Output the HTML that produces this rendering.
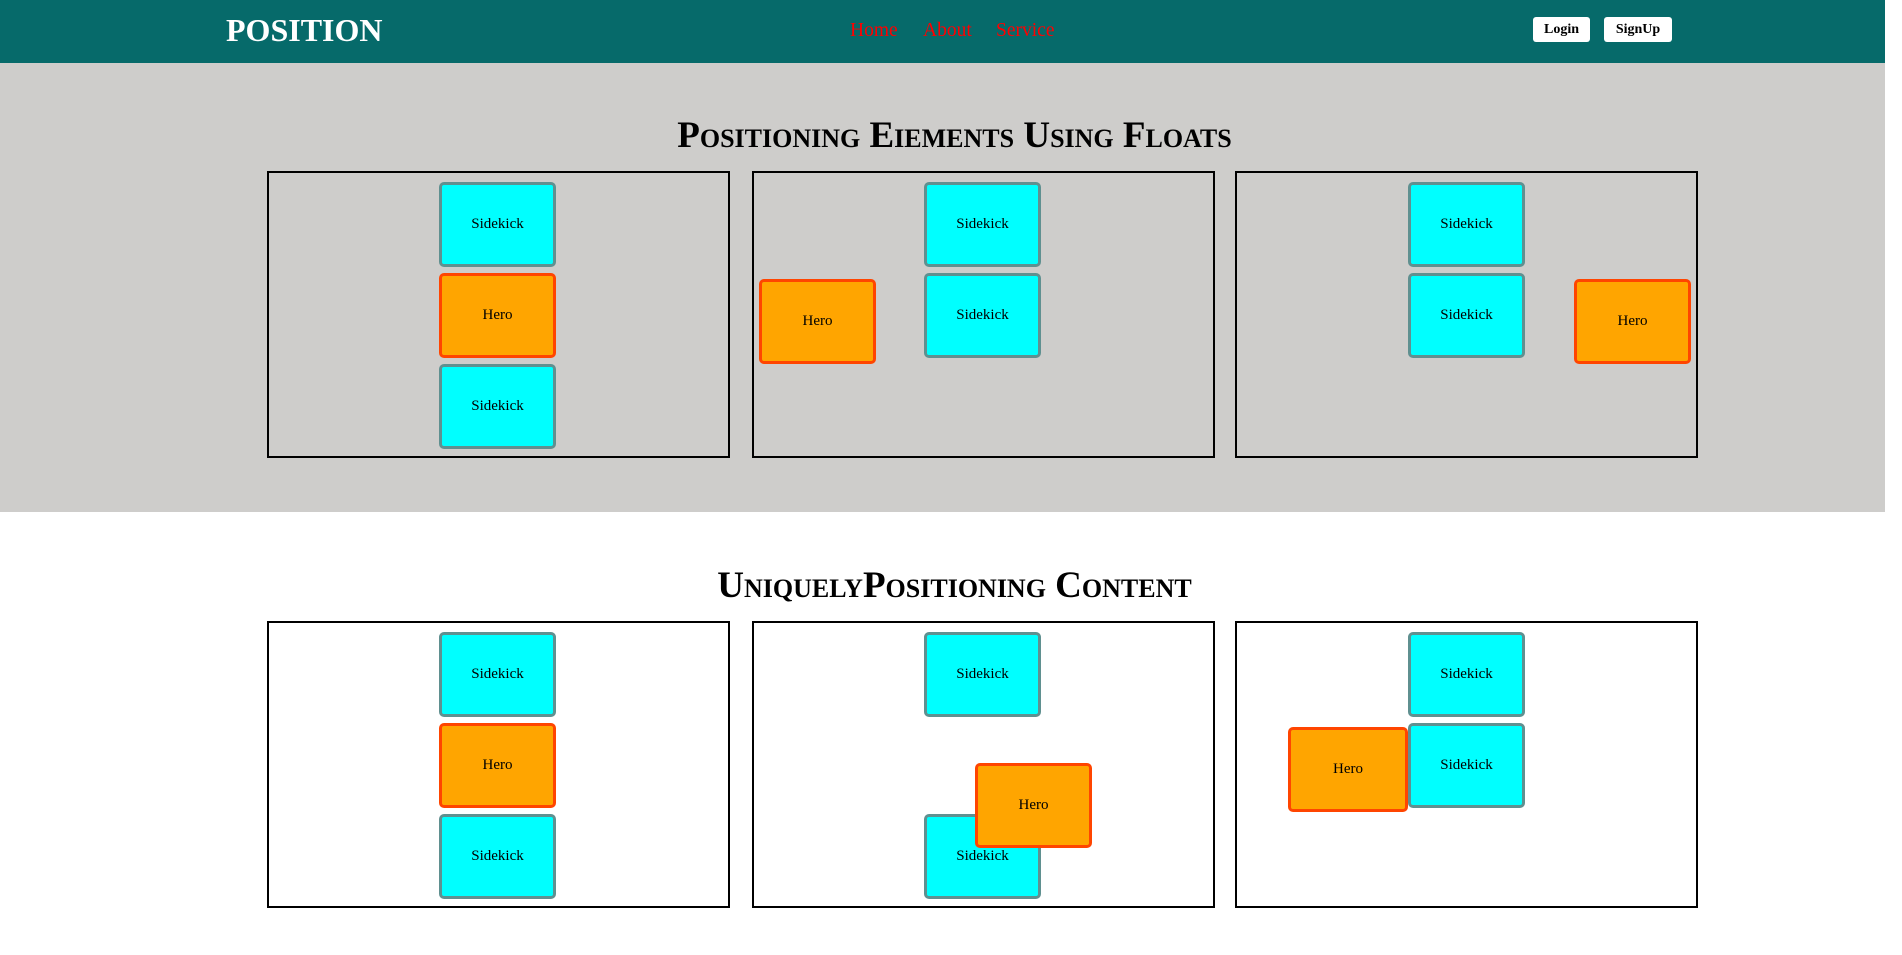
<!DOCTYPE html>
<html><head><meta charset="utf-8"><style>
*{margin:0;padding:0;box-sizing:border-box}
body{width:1902px;height:955px;background:#fff;font-family:"Liberation Serif",serif;position:relative;overflow:hidden}
.nav{position:absolute;left:0;top:0;width:1885px;height:63px;background:#066a6a}
.logo{position:absolute;left:226px;top:12px;color:#fff;font-weight:bold;font-size:32px}
.links a{position:absolute;top:20px;color:#f00;font-size:19.5px;text-decoration:none}
.btn{position:absolute;top:17px;height:25px;background:#fff;border-radius:3px;font-weight:bold;font-size:14px;text-align:center;line-height:25px;color:#000}
.gray{position:absolute;left:0;top:63px;width:1885px;height:449px;background:#cecdcb}
h1{position:absolute;left:12px;width:1885px;text-align:center;font-size:37px;font-variant:small-caps;font-weight:bold;color:#000}
.box{position:absolute;border:2px solid #000;width:463px;height:287px}
.i{position:absolute;width:117px;height:85px;border:3px solid #5f9090;border-radius:5px;background:#0ff;font-size:15px;display:flex;align-items:center;justify-content:center}
.h{background:#ffa500;border-color:#ff4500}
</style></head><body>
<div class="nav">
<div class="logo">POSITION</div>
<div class="links"><a style="left:850px">Home</a><a style="left:923px">About</a><a style="left:996px">Service</a></div>
<div class="btn" style="left:1533px;width:57px">Login</div>
<div class="btn" style="left:1604px;width:68px">SignUp</div>
</div>
<div class="gray"></div>
<h1 style="top:114px">Positioning Eiements Using Floats</h1>
<div class="box" style="left:267px;top:171px"></div>
<div class="box" style="left:752px;top:171px"></div>
<div class="box" style="left:1235px;top:171px"></div>
<div class="i" style="left:439px;top:182px">Sidekick</div>
<div class="i h" style="left:439px;top:273px">Hero</div>
<div class="i" style="left:439px;top:364px">Sidekick</div>
<div class="i h" style="left:759px;top:279px">Hero</div>
<div class="i" style="left:924px;top:182px">Sidekick</div>
<div class="i" style="left:924px;top:273px">Sidekick</div>
<div class="i" style="left:1408px;top:182px">Sidekick</div>
<div class="i" style="left:1408px;top:273px">Sidekick</div>
<div class="i h" style="left:1574px;top:279px">Hero</div>

<h1 style="top:564px">UniquelyPositioning Content</h1>
<div class="box" style="left:267px;top:621px"></div>
<div class="box" style="left:752px;top:621px"></div>
<div class="box" style="left:1235px;top:621px"></div>
<div class="i" style="left:439px;top:632px">Sidekick</div>
<div class="i h" style="left:439px;top:723px">Hero</div>
<div class="i" style="left:439px;top:814px">Sidekick</div>
<div class="i" style="left:924px;top:632px">Sidekick</div>
<div class="i" style="left:924px;top:814px">Sidekick</div>
<div class="i h" style="left:975px;top:763px">Hero</div>
<div class="i" style="left:1408px;top:632px">Sidekick</div>
<div class="i" style="left:1408px;top:723px">Sidekick</div>
<div class="i h" style="left:1288px;top:727px;width:120px">Hero</div>
</body></html>
